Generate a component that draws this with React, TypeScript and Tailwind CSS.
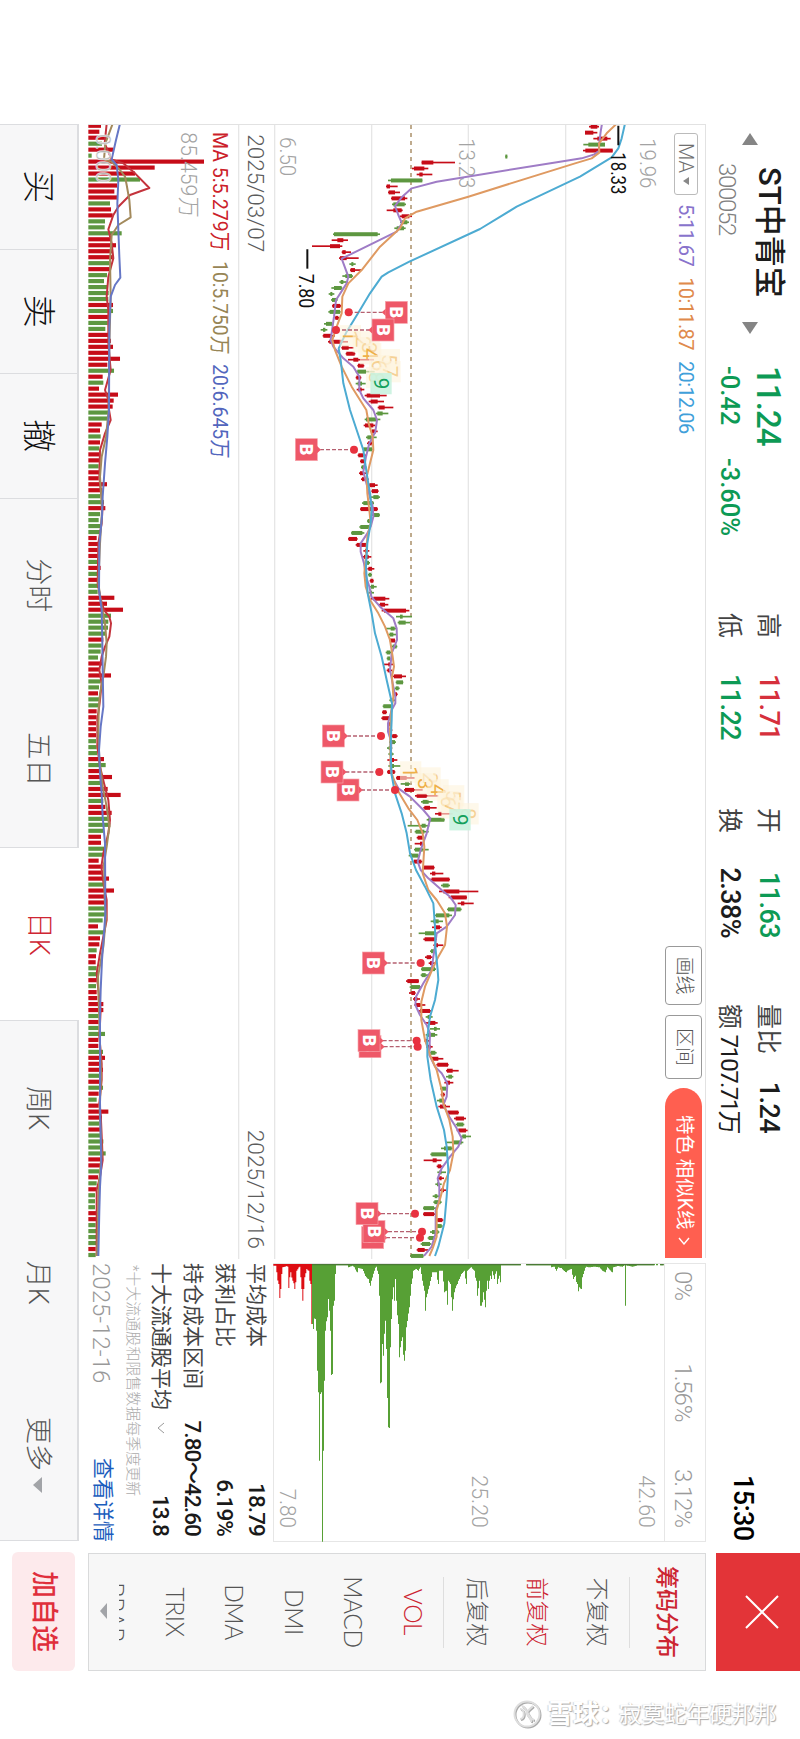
import type { ReactNode } from 'react';
import clsx from 'clsx';

const RED = '#c60c18';
const GREEN = '#5d9740';
const GRID = '#e6e6e6';
const STEP = 17.925;

// direction, low, body bottom, body top, high, volume
type Candle = [0 | 1, number, number, number, number, number];

const CANDLES: Candle[] = [
    [1, 1527, 1532, 1552, 1557, 38], [1, 1515, 1515, 1540, 1552, 33], [1, 1540, 1552, 1582, 1592, 55], [0, 1510, 1525, 1575, 1575, 41],
    [1, 1509, 1516, 1598, 1598, 75], [0, 1276, 1276, 1282, 1282, 10], [1, 1025, 1025, 1060, 1125, 347], [1, 996, 1002, 1033, 1045, 199],
    [1, 1010, 1018, 1028, 1057, 140], [0, 924, 933, 1027, 1027, 155], [1, 918, 920, 930, 953, 86], [1, 924, 926, 945, 960, 78],
    [1, 933, 935, 975, 982, 86], [0, 936, 940, 974, 978, 65], [1, 920, 940, 965, 968, 68], [1, 960, 965, 988, 996, 73],
    [0, 960, 965, 982, 987, 50], [0, 943, 950, 972, 977, 49], [0, 759, 762, 893, 900, 100], [1, 755, 772, 790, 804, 71],
    [1, 696, 750, 780, 787, 83], [1, 785, 787, 797, 813, 73], [1, 777, 780, 800, 836, 73], [0, 808, 814, 820, 827, 64],
    [1, 810, 812, 825, 845, 65], [0, 787, 796, 816, 819, 56], [0, 778, 782, 790, 803, 47], [0, 754, 762, 785, 787, 59],
    [0, 746, 751, 757, 763, 61], [0, 753, 756, 770, 773, 60], [1, 756, 758, 781, 783, 74], [0, 745, 749, 780, 782, 74],
    [1, 764, 766, 775, 777, 61], [0, 732, 738, 756, 760, 58], [0, 722, 729, 736, 742, 51], [1, 728, 730, 755, 765, 59],
    [1, 744, 748, 785, 804, 68], [1, 784, 786, 806, 821, 74], [1, 797, 799, 824, 826, 63], [1, 804, 820, 835, 882, 95],
    [1, 832, 834, 851, 853, 57], [0, 827, 832, 858, 884, 77], [1, 827, 829, 842, 844, 43], [0, 827, 833, 846, 857, 45],
    [1, 830, 835, 845, 853, 32], [1, 854, 860, 900, 920, 89], [1, 866, 872, 893, 912, 76], [1, 893, 896, 914, 940, 73],
    [0, 888, 892, 908, 925, 60], [0, 854, 858, 890, 901, 57], [1, 851, 855, 880, 886, 40], [1, 872, 876, 888, 893, 35],
    [0, 858, 862, 874, 890, 37], [1, 861, 864, 875, 876, 35], [0, 848, 850, 876, 878, 33], [1, 833, 835, 850, 860, 35],
    [1, 840, 842, 854, 858, 32], [0, 843, 845, 853, 860, 31], [1, 837, 840, 850, 858, 35], [1, 843, 846, 854, 866, 31],
    [1, 864, 868, 885, 893, 56], [1, 874, 876, 894, 896, 42], [0, 873, 880, 896, 900, 35], [0, 846, 850, 880, 882, 47],
    [1, 840, 842, 892, 894, 51], [0, 874, 880, 898, 900, 35], [0, 861, 863, 870, 872, 31], [0, 838, 841, 868, 872, 37],
    [0, 813, 815, 847, 853, 35], [1, 804, 806, 831, 833, 25], [1, 827, 830, 858, 860, 29], [1, 850, 855, 862, 868, 28],
    [1, 848, 852, 866, 874, 28], [0, 855, 860, 867, 870, 26], [1, 862, 865, 876, 883, 37], [0, 864, 866, 874, 876, 28],
    [1, 869, 871, 880, 881, 27], [0, 870, 873, 882, 890, 30], [0, 866, 870, 876, 882, 28], [1, 872, 880, 916, 928, 78],
    [1, 894, 900, 915, 925, 56], [1, 905, 912, 978, 988, 104], [0, 948, 960, 968, 996, 68], [0, 953, 956, 977, 990, 60],
    [0, 915, 932, 944, 950, 59], [0, 926, 929, 940, 950, 53], [1, 929, 930, 945, 946, 45], [0, 932, 938, 950, 952, 40],
    [0, 917, 920, 931, 938, 37], [0, 920, 922, 930, 932, 29], [1, 911, 925, 932, 940, 41], [1, 920, 923, 932, 937, 35],
    [1, 938, 942, 966, 978, 68], [0, 947, 949, 969, 970, 37], [0, 944, 947, 956, 959, 32], [1, 940, 944, 951, 953, 29],
    [0, 928, 932, 940, 946, 33], [0, 908, 910, 934, 938, 35], [1, 906, 908, 919, 921, 25], [1, 904, 907, 928, 930, 25],
    [1, 922, 925, 932, 935, 23], [1, 922, 925, 932, 937, 23], [1, 932, 937, 950, 953, 23], [0, 927, 932, 945, 948, 23],
    [0, 921, 926, 932, 937, 25], [0, 925, 929, 937, 941, 27], [1, 922, 930, 942, 952, 47], [0, 925, 930, 942, 962, 52],
    [1, 921, 923, 944, 946, 33], [1, 948, 950, 980, 1004, 71], [0, 962, 975, 987, 990, 41], [1, 972, 975, 1002, 1028, 58],
    [1, 1005, 1010, 1040, 1075, 97], [0, 1023, 1028, 1046, 1058, 45], [1, 1030, 1033, 1050, 1070, 51], [1, 1065, 1075, 1085, 1118, 70],
    [0, 1040, 1045, 1093, 1094, 65], [0, 983, 1025, 1037, 1048, 66], [0, 1004, 1007, 1033, 1046, 45], [1, 1010, 1013, 1028, 1033, 38],
    [1, 1004, 1020, 1027, 1030, 38], [0, 1002, 1005, 1028, 1046, 47], [0, 986, 992, 1015, 1018, 45], [1, 1000, 1002, 1024, 1027, 31],
    [1, 1028, 1032, 1062, 1064, 43], [1, 1050, 1056, 1066, 1090, 43], [1, 1050, 1055, 1108, 1110, 62], [0, 1083, 1088, 1106, 1110, 50],
    [1, 1077, 1090, 1138, 1195, 77], [1, 1106, 1112, 1160, 1161, 51], [1, 1133, 1143, 1153, 1181, 51], [0, 1101, 1104, 1142, 1145, 51],
    [0, 1065, 1068, 1108, 1116, 51], [0, 1052, 1060, 1076, 1089, 43], [1, 1056, 1062, 1080, 1085, 29], [0, 1016, 1035, 1068, 1070, 47],
    [1, 1030, 1034, 1066, 1071, 35], [1, 1060, 1064, 1074, 1090, 33], [0, 1050, 1053, 1063, 1067, 25], [1, 1035, 1040, 1053, 1058, 23],
    [1, 1046, 1050, 1058, 1068, 22], [0, 1023, 1025, 1065, 1068, 25], [0, 1022, 1025, 1037, 1047, 29], [1, 978, 982, 1016, 1017, 25],
    [0, 989, 992, 1020, 1026, 23], [1, 987, 994, 1005, 1007, 25], [1, 999, 1002, 1012, 1020, 27], [1, 1003, 1008, 1022, 1036, 45],
    [1, 1015, 1020, 1050, 1054, 45], [0, 1037, 1043, 1052, 1058, 31], [1, 1034, 1046, 1066, 1073, 31], [0, 1050, 1062, 1070, 1080, 31],
    [0, 1037, 1042, 1065, 1072, 50], [1, 1033, 1036, 1044, 1048, 30], [1, 1038, 1043, 1052, 1058, 30], [0, 1047, 1052, 1066, 1070, 44],
    [1, 1053, 1056, 1075, 1090, 50], [1, 1069, 1072, 1104, 1106, 35], [1, 1098, 1101, 1118, 1136, 44], [0, 1098, 1105, 1116, 1120, 37],
    [1, 1093, 1098, 1110, 1120, 32], [0, 1080, 1083, 1098, 1103, 44], [1, 1082, 1084, 1093, 1095, 31], [0, 1071, 1078, 1092, 1096, 25],
    [1, 1075, 1080, 1098, 1110, 31], [1, 1098, 1102, 1135, 1137, 60], [1, 1122, 1127, 1152, 1158, 41], [0, 1127, 1131, 1150, 1153, 33],
    [1, 1130, 1135, 1158, 1163, 37], [0, 1143, 1147, 1158, 1173, 41], [0, 1096, 1118, 1145, 1150, 45], [0, 1083, 1092, 1115, 1120, 35],
    [0, 1051, 1054, 1100, 1102, 52], [1, 1031, 1058, 1070, 1085, 35], [1, 1070, 1073, 1083, 1088, 41], [0, 1072, 1078, 1085, 1098, 33],
    [1, 1074, 1078, 1085, 1092, 29], [0, 1066, 1071, 1078, 1085, 25], [1, 1080, 1084, 1092, 1098, 25], [0, 1058, 1064, 1072, 1078, 20],
    [0, 1060, 1063, 1082, 1085, 20], [0, 1029, 1031, 1062, 1068, 20], [1, 1029, 1031, 1062, 1070, 25], [1, 1068, 1072, 1087, 1090, 25],
    [0, 1067, 1070, 1085, 1088, 22], [0, 1050, 1056, 1075, 1078, 25], [0, 1043, 1046, 1062, 1064, 25], [0, 1022, 1026, 1050, 1054, 25],
    [1, 1010, 1013, 1034, 1044, 22], [0, 990, 993, 1030, 1031, 22],
];

type Point = [number, number];

const MA5: Point[] = [
    [41, 1566], [65, 1562], [105, 1557], [122, 1557], [133, 1543], [145, 1505], [155, 1440], [215, 1070], [235, 995], [262, 965], [288, 945], [315, 955], [340, 966],
    [365, 950], [446, 785], [500, 805], [520, 800], [570, 768], [620, 762], [690, 752], [710, 760], [745, 790], [770, 820], [800, 838], [840, 838], [865, 850],
    [900, 880], [930, 891], [965, 886], [1000, 868], [1040, 858], [1085, 850], [1115, 858], [1155, 868], [1190, 878], [1220, 880], [1250, 872], [1270, 862],
    [1300, 842], [1325, 842], [1360, 852], [1400, 858], [1430, 868], [1460, 874], [1490, 900], [1525, 940], [1555, 950], [1590, 951], [1630, 935], [1680, 930],
    [1720, 938], [1760, 946], [1780, 946], [1800, 935], [1840, 924], [1865, 924], [1895, 934], [1960, 932], [2000, 936], [2035, 955], [2060, 990], [2100, 1030],
    [2125, 1051], [2170, 1040], [2220, 1022], [2255, 1013], [2280, 1022], [2305, 1045], [2340, 1085], [2360, 1110], [2385, 1127], [2415, 1125], [2450, 1100],
    [2470, 1070], [2510, 1065], [2540, 1060], [2580, 1055], [2620, 1030], [2660, 1008], [2685, 1006], [2715, 1020], [2745, 1040], [2770, 1050], [2835, 1048],
    [2870, 1065], [2890, 1085], [2920, 1102], [2960, 1100], [2985, 1090], [3020, 1108], [3055, 1130], [3085, 1145], [3110, 1135], [3140, 1110], [3175, 1085],
    [3205, 1073], [3230, 1078], [3270, 1078], [3300, 1067], [3370, 1067], [3410, 1055], [3438, 1032],
];

const MA10: Point[] = [
    [41, 1610], [70, 1580], [100, 1557], [128, 1558], [145, 1535], [160, 1485], [260, 1165], [305, 1010], [325, 975], [355, 960], [410, 900], [480, 845], [520, 805],
    [560, 787], [610, 785], [650, 770], [690, 757], [720, 765], [770, 785], [830, 815], [900, 859], [940, 866], [980, 878], [1020, 880], [1060, 870], [1100, 860],
    [1150, 862], [1200, 868], [1240, 872], [1280, 862], [1340, 858], [1390, 853], [1430, 857], [1470, 870], [1510, 895], [1550, 915], [1590, 930], [1640, 938],
    [1670, 942], [1700, 936], [1760, 940], [1810, 933], [1860, 930], [1920, 931], [1980, 932], [2020, 945], [2050, 958], [2095, 985], [2130, 1012], [2170, 1028],
    [2210, 1033], [2290, 1028], [2340, 1045], [2370, 1070], [2410, 1095], [2450, 1101], [2505, 1095], [2540, 1075], [2580, 1056], [2630, 1035], [2675, 1024],
    [2730, 1024], [2790, 1035], [2835, 1050], [2880, 1070], [2940, 1085], [2980, 1090], [3030, 1108], [3080, 1118], [3130, 1120], [3180, 1110], [3220, 1092],
    [3260, 1082], [3300, 1070], [3380, 1070], [3415, 1058], [3438, 1048],
];

const MA20: Point[] = [
    [41, 1635], [85, 1625], [115, 1615], [142, 1595], [200, 1500], [290, 1310], [357, 1200], [455, 988], [487, 925], [500, 905], [550, 870], [600, 840], [665, 800],
    [715, 776], [750, 782], [820, 790], [900, 810], [960, 830], [1020, 850], [1090, 860], [1150, 870], [1200, 875], [1240, 872], [1300, 862], [1370, 858],
    [1450, 863], [1510, 875], [1570, 885], [1640, 905], [1710, 920], [1780, 936], [1830, 935], [1900, 932], [1990, 934], [2050, 945], [2110, 965], [2170, 980],
    [2230, 990], [2280, 1008], [2330, 1035], [2380, 1060], [2450, 1065], [2510, 1066], [2580, 1073], [2610, 1075], [2670, 1065], [2720, 1050], [2780, 1042],
    [2840, 1042], [2910, 1052], [2990, 1070], [3060, 1092], [3110, 1100], [3180, 1105], [3260, 1100], [3340, 1093], [3410, 1075], [3438, 1065],
];

const VOL5: Point[] = [
    [41, 80], [100, 74], [148, 95], [160, 130], [190, 165], [234, 208], [255, 150], [290, 115], [315, 100], [358, 85], [400, 95], [445, 100], [500, 85], [560, 80],
    [600, 85], [700, 85], [780, 92], [840, 75], [870, 85], [900, 87], [930, 92], [970, 75], [1020, 60], [1100, 58], [1140, 62], [1180, 68], [1240, 65], [1300, 55],
    [1420, 53], [1460, 60], [1500, 72], [1520, 88], [1540, 93], [1580, 88], [1610, 75], [1640, 65], [1680, 58], [1720, 65], [1770, 60], [1830, 52], [1910, 52],
    [1970, 60], [2020, 72], [2070, 85], [2130, 90], [2170, 85], [2230, 70], [2270, 64], [2330, 72], [2370, 80], [2430, 80], [2490, 68], [2530, 60], [2590, 50],
    [2640, 55], [2700, 62], [2780, 58], [2860, 65], [2910, 65], [2980, 58], [3010, 62], [3100, 66], [3150, 68], [3200, 60], [3240, 50], [3438, 50],
];

const VOL10: Point[] = [
    [41, 98], [100, 76], [148, 72], [155, 95], [180, 120], [200, 135], [225, 140], [270, 148], [322, 152], [345, 115], [375, 95], [450, 90], [560, 92], [700, 88],
    [900, 86], [980, 78], [1040, 65], [1100, 60], [1200, 66], [1300, 60], [1420, 55], [1490, 65], [1540, 75], [1600, 80], [1640, 78], [1700, 70], [1750, 60],
    [1800, 56], [1870, 55], [1950, 58], [2030, 68], [2090, 80], [2150, 88], [2210, 80], [2260, 72], [2370, 74], [2420, 78], [2510, 70], [2600, 54], [2700, 57],
    [2900, 63], [3000, 59], [3130, 65], [3220, 57], [3438, 51],
];

const VOL20: Point[] = [
    [41, 120], [90, 108], [148, 95], [165, 110], [210, 115], [280, 112], [440, 118], [503, 121], [525, 105], [560, 92], [650, 88], [900, 87], [980, 82], [1060, 75],
    [1160, 68], [1220, 66], [1300, 58], [1440, 57], [1500, 65], [1600, 67], [1680, 68], [1790, 70], [1850, 62], [1920, 57], [1990, 60], [2050, 65], [2120, 68],
    [2200, 75], [2410, 76], [2470, 72], [2550, 66], [2640, 62], [2710, 60], [2980, 60], [3080, 62], [3160, 64], [3230, 60], [3300, 58], [3438, 55],
];

// time, dot level, flag level
const BUYS: [number, number, number][] = [
    [607, 806, 949],
    [660, 768, 909],
    [1019, 822, 679],
    [1878, 903, 760],
    [2040, 945, 804],
    [1986, 898, 756],
    [2559, 1022, 880],
    [2810, 1013, 870],
    [2792, 1010, 867],
    [3383, 1020, 878],
    [3365, 1026, 882],
    [3311, 1005, 861],
];

const CHIPS_RED: Point[] = [
    [577, 5], [583, 5], [587, 25], [592, 60], [595, 102], [598, 75], [602, 30], [606, 10], [612, 8], [618, 6], [622, 10], [624, 72], [627, 40], [630, 25], [634, 50],
    [640, 60], [642, 75], [645, 55], [648, 20], [655, 8], [660, 40], [665, 110], [668, 75], [672, 40], [677, 15], [682, 20], [688, 60], [691, 180], [693, 180],
];

const CHIPS_GREEN: Point[] = [
    [693, 180], [696, 195], [698, 160], [702, 165], [706, 200], [709, 320], [712, 385], [714, 590], [717, 390], [721, 385], [723, 560], [725, 833], [727, 560],
    [728, 375], [731, 350], [733, 200], [738, 160], [741, 105], [744, 140], [747, 200], [751, 333], [753, 330], [755, 140], [760, 110], [764, 30], [766, 4], [800, 4],
    [803, 10], [815, 5], [820, 10], [828, 25], [832, 12], [845, 15], [855, 40], [862, 45], [868, 65], [872, 50], [880, 20], [885, 8], [893, 30], [895, 95],
    [899, 358], [902, 355], [905, 240], [908, 275], [912, 170], [917, 255], [921, 490], [925, 492], [928, 250], [932, 165], [936, 70], [940, 110], [943, 45],
    [947, 110], [951, 180], [956, 280], [959, 250], [963, 220], [969, 290], [973, 260], [977, 190], [985, 130], [992, 60], [998, 20], [1005, 15], [1012, 20],
    [1018, 10], [1025, 50], [1030, 80], [1034, 140], [1037, 100], [1045, 65], [1055, 25], [1065, 25], [1072, 60], [1075, 20], [1085, 20], [1090, 85], [1095, 80],
    [1099, 122], [1103, 50], [1108, 60], [1115, 140], [1119, 85], [1128, 60], [1135, 45], [1142, 30], [1150, 20], [1156, 60], [1160, 20], [1170, 10], [1180, 20],
    [1185, 50], [1190, 95], [1195, 50], [1198, 125], [1202, 125], [1205, 115], [1208, 85], [1213, 130], [1216, 80], [1220, 50], [1223, 75], [1227, 35], [1230, 45],
    [1235, 22], [1240, 45], [1245, 22], [1250, 60], [1254, 35], [1258, 55], [1262, 4], [1319, 4], [1320, 0], [1335, 0], [1336, 4], [1407, 4], [1410, 10], [1420, 8],
    [1426, 20], [1432, 10], [1440, 12], [1455, 25], [1460, 20], [1470, 15], [1478, 45], [1482, 35], [1488, 60], [1492, 82], [1496, 70], [1500, 75], [1505, 40],
    [1510, 20], [1515, 8], [1525, 10], [1540, 8], [1555, 10], [1565, 20], [1573, 25], [1580, 10], [1593, 25], [1598, 10], [1610, 6], [1625, 8], [1631, 4],
    [1632, 125], [1634, 125], [1635, 4], [1655, 8], [1670, 4], [1719, 4], [1720, 0], [1725, 0], [1726, 4], [1730, 4], [1731, 0], [1737, 0], [1738, 4], [1748, 4],
];

const tx = (t: number) => t - 45;
const py = (v: number) => 1749 - v;
const line = (pts: Point[]) => pts.map(([t, v]) => `${tx(t)},${py(v)}`).join(' ');

// length of the profile at one price, between two known points
const lengthAt = (pts: Point[], v: number) => {
    const i = pts.findIndex(([p]) => p >= v);
    if (i <= 0) return pts[0][1];
    const [v0, l0] = pts[i - 1];
    const [v1, l1] = pts[i];
    return l0 + ((l1 - l0) * (v - v0)) / (v1 - v0);
};

// stepped area that grows to the right of the price axis
const chipArea = (pts: Point[]) => {
    const first = pts[0][0];
    const last = pts[pts.length - 1][0];
    let d = `M0 ${py(first)}`;
    for (let v = first; v < last; v += 3) {
        const end = Math.min(v + 3, last);
        const peaks = pts.filter(([p]) => p >= v && p < end).map(([, len]) => len);
        const len = peaks.length ? Math.max(...peaks) : lengthAt(pts, (v + end) / 2);
        d += `H${len}V${py(end)}`;
    }
    return `${d}H0Z`;
};

interface LabelProps {
    x: number;
    y: number;
    width: number;
    size?: number;
    fill?: string;
    weight?: number;
    children: ReactNode;
}

function Label({ x, y, width, size = 68, fill = '#a3a3a3', weight = 300, children }: LabelProps) {
    return (
        <text x={x - 4} y={y} fontSize={size} textLength={width} lengthAdjust="spacingAndGlyphs" fill={fill} fontWeight={weight}>
            {children}
        </text>
    );
}

function Signals({ start }: { start: number }) {
    return (
        <g>
            {[1, 2, 3, 4, 5, 6, 7, 8, 9].map((n) => {
                const i = start + n - 1;
                const x = tx(50 + i * STEP);
                const y = py(CANDLES[i][4] + 46);
                const done = n === 9;
                return (
                    <g key={n}>
                        <rect x={x - 32} y={y - 32} width={64} height={64} fill={done ? '#c9f2df' : '#fdf3dc'} fillOpacity={done ? 0.9 : 0.6} />
                        <text x={x} y={y + 22} fontSize={62} textAnchor="middle" fill={done ? '#12a05c' : '#eeb04a'} fillOpacity={done || n === 4 || n === 3 || n === 1 ? 1 : 0.55}>
                            {n}
                        </text>
                    </g>
                );
            })}
        </g>
    );
}

function BuyFlag({ t, dot, flag }: { t: number; dot: number; flag: number }) {
    const x = tx(t);
    const y = py(flag);
    const dir = flag > dot ? -1 : 1;
    return (
        <g>
            <line x1={x} x2={x} y1={py(dot)} y2={y - dir * 42} stroke="#b56070" strokeWidth={4} strokeDasharray="12 6" />
            <circle cx={x} cy={py(dot)} r={12} fill="#e8323f" />
            <rect x={x - 33} y={y - 33} width={66} height={66} fill="#ee5868" stroke="#f7a5ac" strokeWidth={2} />
            <polygon points={`${x - 11},${y - dir * 32} ${x + 11},${y - dir * 32} ${x},${y - dir * 44}`} fill="#ee5868" />
            <text x={x} y={y + 19} fontSize={54} fontWeight={900} textAnchor="middle" fill="#fff">
                B
            </text>
        </g>
    );
}

function KLine() {
    return (
        <svg viewBox="0 0 3402 1724" className="block w-[1134px] h-[574.67px]" fontFamily="Roboto, 'Noto Sans CJK SC', sans-serif">
            {[1457, 1165, 875, 584, 476].map((v) => (
                <line key={v} x1={0} x2={3402} y1={py(v)} y2={py(v)} stroke={GRID} strokeWidth={4} />
            ))}
            <line x1={0} x2={3402} y1={py(993)} y2={py(993)} stroke="#b39b78" strokeWidth={5} strokeDasharray="12 12" />

            <Label x={44} y={py(1680)} width={150}>19.96</Label>
            <Label x={44} y={py(1138)} width={150}>13.23</Label>
            <Label x={40} y={py(600)} width={118}>6.50</Label>

            {CANDLES.map(([up, low, bottom, top, high, vol], i) => {
                const x = tx(50 + i * STEP);
                const fill = up ? RED : GREEN;
                return (
                    <g key={i} fill={fill}>
                        <rect x={x - 2.5} y={py(high)} width={5} height={high - low} />
                        <rect x={x - 6} y={py(top)} width={12} height={top - bottom} />
                        <rect x={x - 9} y={py(25 + vol)} width={12.5} height={vol} />
                    </g>
                );
            })}

            <g fill="none" strokeWidth={6} strokeLinejoin="round">
                <polyline points={line(VOL5)} stroke="#c4333c" />
                <polyline points={line(VOL10)} stroke="#a38a5c" />
                <polyline points={line(VOL20)} stroke="#6677c6" />
                <polyline points={line(MA5)} stroke="#9f7cc6" />
                <polyline points={line(MA10)} stroke="#df9a62" />
                <polyline points={line(MA20)} stroke="#4dabd2" />
            </g>

            <Signals start={35} />
            <Signals start={108} />
            {BUYS.map(([t, dot, flag]) => (
                <BuyFlag key={t} t={t} dot={dot} flag={flag} />
            ))}

            <line x1={2} x2={61} y1={py(1615)} y2={py(1615)} stroke="#111" strokeWidth={6} />
            <Label x={86} y={py(1592)} size={61} width={126} fill="#111" weight={400}>18.33</Label>
            <line x1={373} x2={431} y1={py(682)} y2={py(682)} stroke="#111" strokeWidth={6} />
            <Label x={450} y={py(658)} size={61} width={104} fill="#111" weight={400}>7.80</Label>

            <Label x={32} y={py(503)} width={354} fill="#5c5c5c">2025/03/07</Label>
            <Label x={3018} y={py(503)} width={358} fill="#5c5c5c">2025/12/16</Label>

            <Label x={25} y={py(398)} size={63} width={358} fill="#cc1f2b" weight={400}>MA 5:5.279万</Label>
            <Label x={413} y={py(398)} size={63} width={280} fill="#978555" weight={400}>10:5.750万</Label>
            <Label x={721} y={py(398)} size={63} width={284} fill="#5266bd" weight={400}>20:6.645万</Label>
            <Label x={26} y={py(302)} width={256}>85.459万</Label>
            <text x={26} y={py(49)} fontSize={62} textLength={148} fill="#b5b5b5" stroke="#fff" strokeOpacity={0.7} strokeWidth={2}>0.000</text>
        </svg>
    );
}

function Quote({ label, value, className, wide }: { label: string; value: string; className: string; wide?: boolean }) {
    return (
        <div className="flex h-[39px] items-center justify-between">
            <span className="text-[25px] text-[#444]">{label}</span>
            <span className={clsx(wide ? 'text-[24px] tracking-[-1.6px]' : 'text-[27px] font-medium tracking-[-0.6px]', className)}>{value}</span>
        </div>
    );
}

function Header() {
    return (
        <header className="flex h-[94px] items-start pl-[133px]">
            <svg viewBox="0 0 12 16" className="mt-[42px] w-3 h-4">
                <path d="M0 8 12 0v16z" fill="#858585" />
            </svg>
            <div className="ml-[18px] w-[159px] pt-3">
                <div className="flex h-[39px] items-center pl-1 text-[31px] font-medium text-[#1c1c1c] whitespace-nowrap">ST中青宝</div>
                <div className="flex h-[39px] items-center pt-1 text-[24px] font-light tracking-[-1.3px] text-[#808080]">300052</div>
            </div>
            <svg viewBox="0 0 12 16" className="mt-[42px] w-3 h-4">
                <path d="M12 8 0 0v16z" fill="#858585" />
            </svg>
            <div className="ml-[32px] w-[247px] pt-3 font-medium text-[#0d9a55]">
                <div className="flex h-[39px] items-center text-[33px] tracking-[-0.9px]">11.24</div>
                <div className="flex h-[39px] items-center text-[25.5px]">
                    <span className="w-[92px]">-0.42</span>
                    <span>-3.60%</span>
                </div>
            </div>
            <div className="w-[127px] pt-3">
                <Quote label="高" value="11.71" className="text-[#d6303c]" />
                <Quote label="低" value="11.22" className="text-[#0d9a55]" />
            </div>
            <div className="ml-[68px] w-[130px] pt-3">
                <Quote label="开" value="11.63" className="text-[#0d9a55]" />
                <Quote label="换" value="2.38%" className="text-[#1c1c1c]" />
            </div>
            <div className="ml-[66px] w-[129px] pt-3 whitespace-nowrap">
                <Quote label="量比" value="1.24" className="text-[#1c1c1c]" />
                <Quote label="额" value="7107.71万" className="text-[#1c1c1c]" wide />
            </div>
            <div className="ml-[342px] mt-[41px] w-[78px] text-[27px] leading-8 font-medium tracking-[-0.6px] text-black">15:30</div>
            <button className="flex h-[84px] w-[118px] items-center justify-center bg-[#e33438] pb-2">
                <svg viewBox="0 0 34 34" className="w-[34px] h-[34px]">
                    <path d="M1 1l32 32M33 1 1 33" stroke="#fff" strokeWidth={2} />
                </svg>
            </button>
        </header>
    );
}

function ChartToolbar() {
    return (
        <div className="flex h-[43px] items-center border-t border-[#e2e2e2] pl-2">
            <div className="flex h-6 w-[62px] -mt-1 items-center justify-center gap-1 rounded-[3px] border border-[#bbb] text-[20px] font-light text-[#707070]">
                MA
                <svg viewBox="0 0 8 6" className="w-2 h-1.5">
                    <path d="M0 0h8L4 6z" fill="#888" />
                </svg>
            </div>
            <div className="flex -mt-1 ml-[9px] gap-[11px] text-[20px] tracking-[-0.6px] whitespace-nowrap">
                <span className="text-[#8873cc]">5:11.67</span>
                <span className="text-[#e08a4c]">10:11.87</span>
                <span className="text-[#3fa0da]">20:12.06</span>
            </div>
            <div className="ml-auto flex h-[37px] text-[19px] whitespace-nowrap">
                <button className="w-[59px] rounded-[4px] border border-[#999] font-light text-[#555]">画线</button>
                <button className="ml-[10px] w-[64px] rounded-[4px] border border-[#999] font-light text-[#555]">区间</button>
                <button className="ml-[9px] flex w-[170px] items-center rounded-l-full bg-[#ff5f50] pl-[27px] text-[19.5px] text-white">
                    <span>特色 相似K线</span>
                    <svg viewBox="0 0 8 12" className="ml-[7px] w-2 h-3">
                        <path d="M1 1l6 5-6 5" fill="none" stroke="#fff" strokeWidth={1.4} />
                    </svg>
                </button>
            </div>
        </div>
    );
}

const COSTS = [
    { label: '平均成本', value: '18.79' },
    { label: '获利占比', value: '6.19%' },
    { label: '持仓成本区间', value: '7.80～42.60' },
    { label: '十大流通股平均', value: '13.8', expandable: true },
];

function ChipPanel() {
    return (
        <section className="ml-[5px] flex w-[279px] flex-col">
            <div className="flex h-[43px] items-center justify-between border border-[#e6e6e6] pt-1 pr-3.5 pl-[7px] text-[24px] font-light tracking-[-1.1px] text-[#9a9a9a]">
                <span>0%</span>
                <span className="pl-4">1.56%</span>
                <span>3.12%</span>
            </div>
            <div className="h-[391px] border-x border-b border-[#e6e6e6]">
                <svg viewBox="0 0 834 1173" className="block w-[278px] h-[391px]" fontFamily="Roboto, sans-serif">
                    <Label x={638} y={py(1673)} width={158}>42.60</Label>
                    <Label x={638} y={py(1173)} width={158}>25.20</Label>
                    <Label x={678} y={py(598)} width={118}>7.80</Label>
                    <path d={chipArea(CHIPS_RED)} fill="#dd0d12" />
                    <path d={chipArea(CHIPS_GREEN)} fill="#57a035" />
                    <path d={`M1 ${py(1748)}V${py(1738)}M1 ${py(1719)}V${py(1336)}M1 ${py(1319)}V${py(693)}`} stroke="#4a7a35" strokeWidth={5} />
                </svg>
            </div>
            <div className="pt-[1.5px] text-[21px] whitespace-nowrap">
                {COSTS.map((row) => (
                    <div key={row.label} className="flex h-[31.7px] items-center justify-between pr-[6px]">
                        <span className="flex items-center gap-3 text-[#444]">
                            {row.label}
                            {row.expandable && (
                                <svg viewBox="0 0 12 8" className="w-3 h-2">
                                    <path d="M1 1l5 6 5-6" fill="none" stroke="#999" />
                                </svg>
                            )}
                        </span>
                        <span className="text-[22.5px] font-medium tracking-[-0.9px] text-[#1a1a1a]">{row.value}</span>
                    </div>
                ))}
                <p className="h-[26px] pl-0.5 text-[15px] leading-[24px] font-light text-[#acacac]">*十大流通股和限售数据每季度更新</p>
                <div className="flex h-[32px] items-center justify-between">
                    <span className="pt-1 text-[24px] font-light text-[#999]">2025-12-16</span>
                    <a className="text-[21px] text-[#1b5dbd]">查看详情</a>
                </div>
            </div>
        </section>
    );
}

const INDICATORS = ['VOL', 'MACD', 'DMI', 'DMA', 'TRIX', 'BRAR'];

function SideMenu() {
    return (
        <aside className="ml-[11px] flex h-[618px] w-[118px] flex-col items-center border border-[#d9dadb] bg-[#f7f7f7] text-[23px] text-[#555] whitespace-nowrap">
            <div className="flex h-[75px] items-center pt-1 font-medium text-[#cc2531]">筹码分布</div>
            <div className="flex w-[71px] flex-col items-center border-y border-[#dedede] font-light">
                <div className="flex h-[62px] items-center pt-1">不复权</div>
                <div className="flex h-[60px] items-center pt-0.5 text-[#cc2531]">前复权</div>
                <div className="flex h-[63px] items-center">后复权</div>
            </div>
            <div className="flex h-[324px] w-full flex-col items-center overflow-hidden pt-px font-[Lato] text-[24.5px] font-light tracking-[-0.4px]">
                {INDICATORS.map((name) => (
                    <div key={name} className={clsx('flex h-[59.5px] shrink-0 items-center', name === 'VOL' && 'text-[#cc2531]')}>{name}</div>
                ))}
            </div>
        </aside>
    );
}

const TABS = ['分时', '五日', '日K', '周K', '月K', '更多'];

function BottomBar() {
    return (
        <footer className="mt-[9px] flex h-[79px] items-start pl-[124px] text-[#555]">
            {['买', '卖', '撤'].map((name) => (
                <div key={name} className="flex h-full w-[124.5px] items-center justify-center border-t-2 border-l border-[#dcdde0] bg-[#f7f7f8] text-[33px] font-light text-[#111]">{name}</div>
            ))}
            {TABS.map((name, i) => {
                const active = name === '日K';
                return (
                    <div
                        key={name}
                        className={clsx(
                            'flex h-full items-center justify-center gap-1.5 pt-0.5 text-[27px] font-light',
                            i === 5 ? 'w-[171px] border-r' : 'w-[174.5px]',
                            i === 0 && 'border-l',
                            active ? 'border-x bg-white text-[#cf2633]' : 'border-t-2 bg-[#f7f7f8]',
                            'border-[#dcdde0]',
                        )}
                    >
                        {name}
                        {i === 5 && (
                            <svg viewBox="0 0 16 9" className="w-4 h-[9px]">
                                <path d="M0 0h16L8 9z" fill="#a2a4a8" />
                            </svg>
                        )}
                    </div>
                );
            })}
            <button className="ml-[11px] mt-1 h-[63px] w-[119px] rounded-md bg-[#fdeaec] text-[27px] font-medium text-[#e02f3c]">加自选</button>
        </footer>
    );
}

export default function App() {
    return (
        <div className="relative h-[1739px] w-[800px] overflow-hidden bg-white font-[Roboto,'Noto_Sans_CJK_SC',sans-serif]">
            <div className="flex h-[800px] w-[1739px] origin-top-left translate-x-[800px] rotate-90 flex-col">
                <Header />
                <main className="flex h-[618px] pl-[124px]">
                    <section className="w-[1134px] border-l border-[#e2e2e2]">
                        <ChartToolbar />
                        <KLine />
                    </section>
                    <ChipPanel />
                    <div className="relative">
                        <SideMenu />
                        <svg viewBox="0 0 16 7" className="absolute bottom-[12px] left-[61px] w-4 h-[7px]">
                            <path d="M0 0h16L8 7z" fill="#a2a4a8" />
                        </svg>
                    </div>
                </main>
                <BottomBar />
            </div>

            <div className="absolute bottom-[9px] left-[513px] flex items-center text-white [text-shadow:1px_1px_1px_#a8a8a8,-1px_0_1px_#d5d5d5]">
                <svg viewBox="0 0 28 28" className="w-7 h-7 drop-shadow-[1px_1px_0.5px_#aaa]" fill="none" stroke="#dedede" strokeWidth={2}>
                    <circle cx={14} cy={14} r={12.5} />
                    <path d="M7 9c5 0 5 10 0 10M9 6c6 3 6 13 12 14M20 6c-3 3-7 5-6 8s5 5 4 8" />
                </svg>
                <span className="ml-[6px] w-[72px] text-[26px] leading-8 font-bold whitespace-nowrap">雪球：</span>
                <span className="text-[22.5px] leading-8 whitespace-nowrap">寂寞蛇年硬邦邦</span>
            </div>
        </div>
    );
}
